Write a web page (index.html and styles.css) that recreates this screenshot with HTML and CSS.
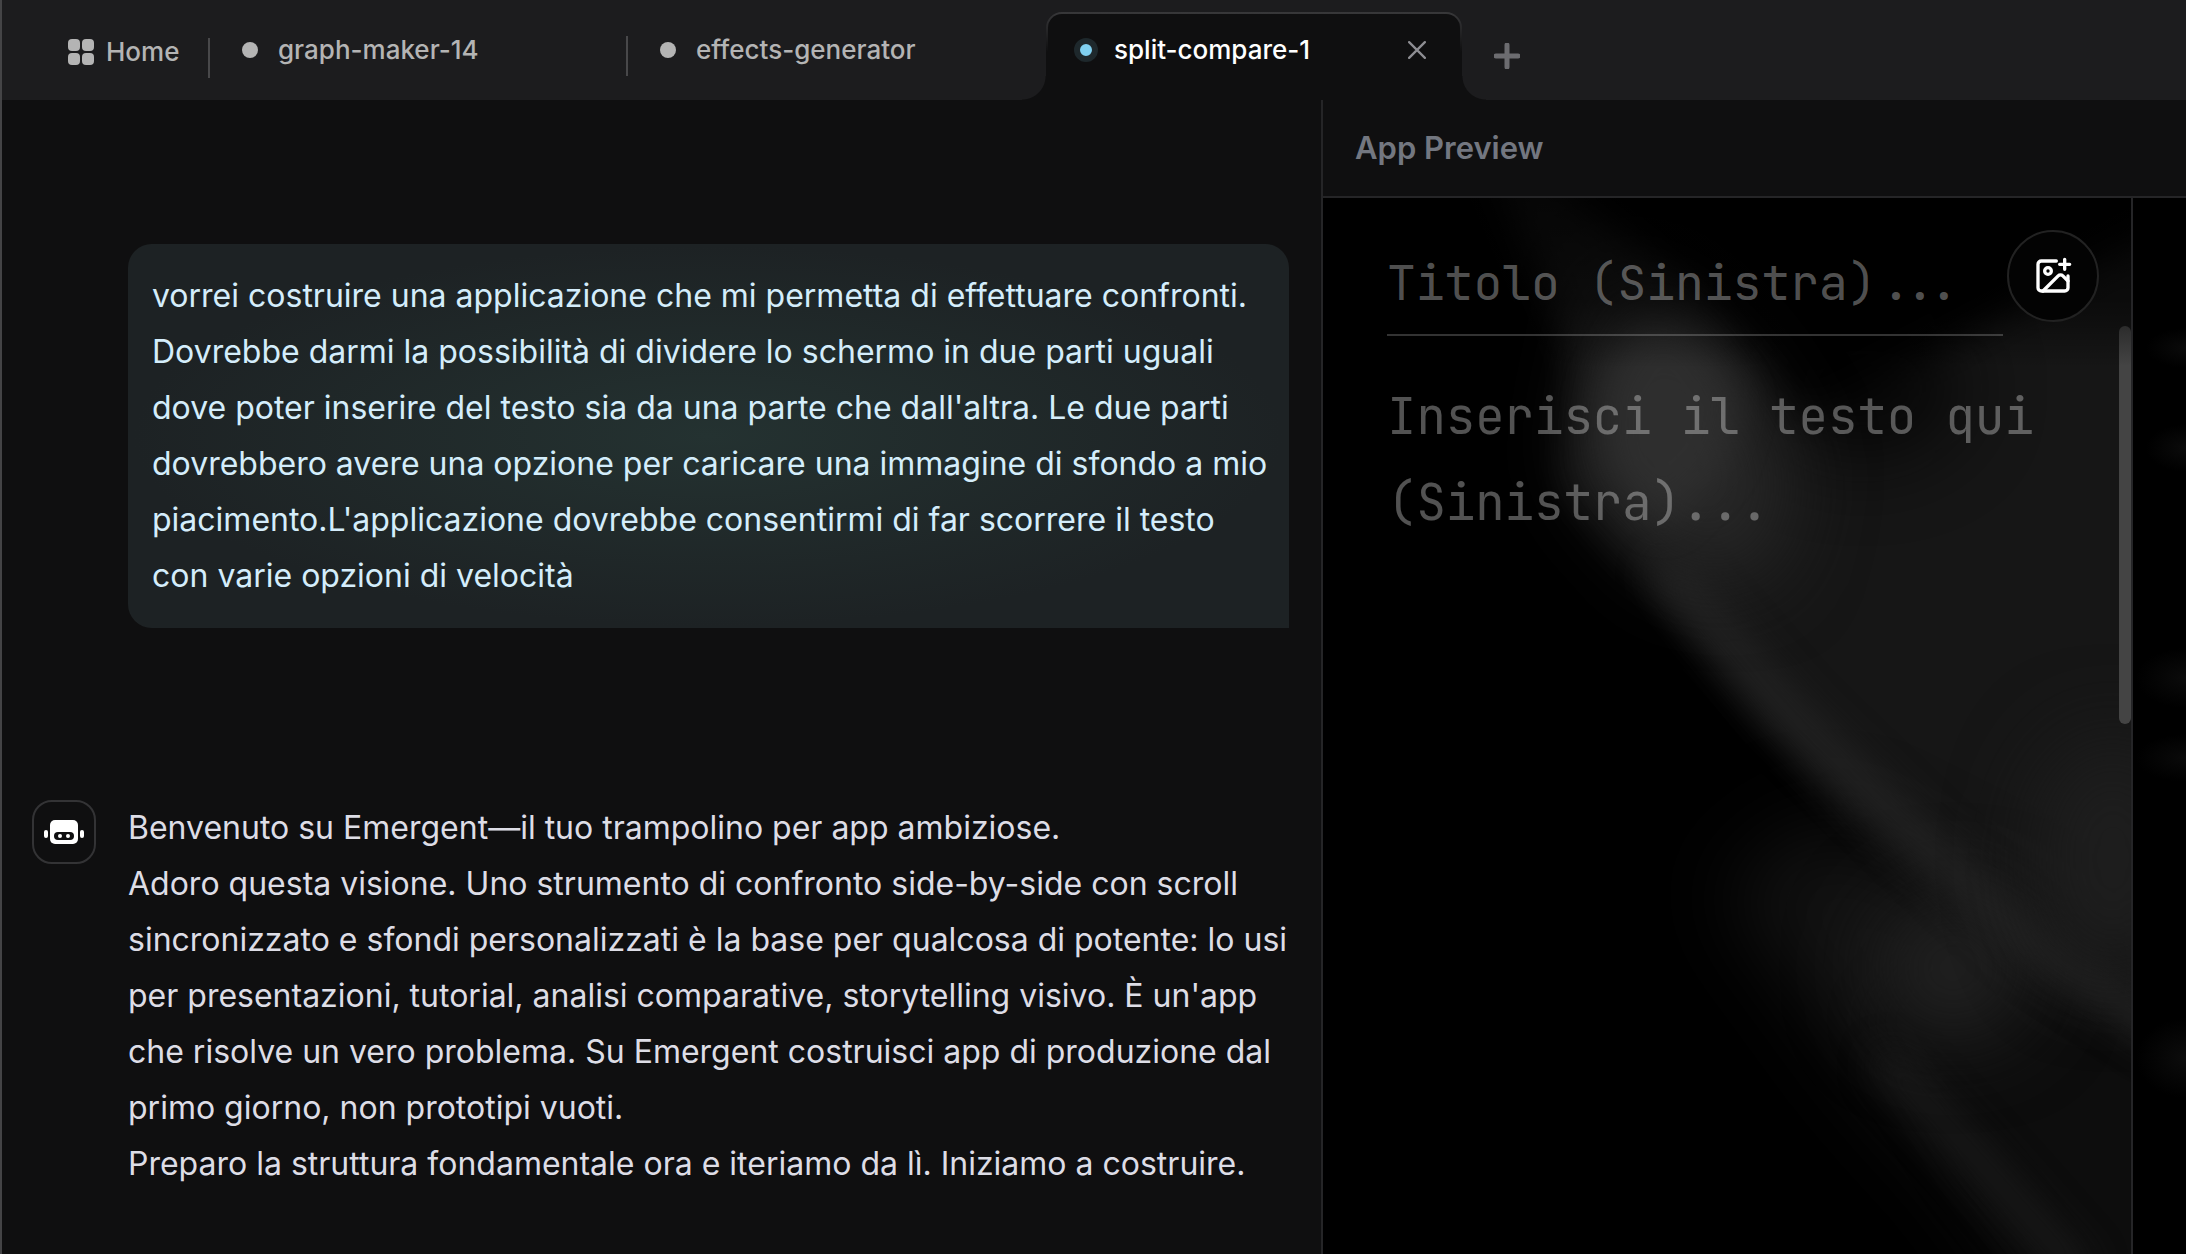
FILE: index.html
```html
<!DOCTYPE html>
<html lang="it">
  <head>
    <meta charset="utf-8">
    <title>split-compare-1</title>
    <link rel="stylesheet" href="styles.css">
  </head>
  <body>
    <nav class="tab-bar">
      <a href="#home" class="home-link">
        <svg class="home-icon" viewBox="0 0 26 26">
          <rect width="12" height="12" rx="4"/>
          <rect x="14" width="12" height="12" rx="4"/>
          <rect y="14" width="12" height="12" rx="4"/>
          <rect x="14" y="14" width="12" height="12" rx="4"/>
        </svg>
        Home
      </a>
      <a href="#graph-maker-14" class="tab tab-first"><span class="dot"></span>graph-maker-14</a>
      <a href="#effects-generator" class="tab"><span class="dot"></span>effects-generator</a>
      <div class="tab tab-active">
        <a href="#split-compare-1" class="tab-link"><span class="dot dot-live"></span>split-compare-1</a>
        <button type="button" class="icon-button" aria-label="Close tab">
          <svg class="close-icon" viewBox="0 0 16 16"><path d="M1 1l14 14M15 1L1 15"/></svg>
        </button>
      </div>
      <button type="button" class="icon-button new-tab" aria-label="New tab">
        <svg class="plus-icon" viewBox="0 0 26 26"><path d="M13 2v22M2 13h22"/></svg>
      </button>
    </nav>
    <main class="workspace">
      <section class="chat">
        <div class="user-message">vorrei costruire una applicazione che mi permetta di effettuare confronti. Dovrebbe darmi la possibilità di dividere lo schermo in due parti uguali dove poter inserire del testo sia da una parte che dall'altra. Le due parti dovrebbero avere una opzione per caricare una immagine di sfondo a mio piacimento.L'applicazione dovrebbe consentirmi di far scorrere il testo con varie opzioni di velocità</div>
        <div class="agent-message">
          <div class="avatar">
            <svg class="robot-icon" viewBox="0 0 40 24">
              <rect x="0" y="10" width="4" height="8" rx="2"/>
              <rect x="36" y="10" width="4" height="8" rx="2"/>
              <rect x="6" y="0" width="28" height="24" rx="5"/>
              <rect class="robot-face" x="10" y="12" width="20" height="8" rx="4"/>
              <circle cx="16" cy="16" r="2"/>
              <circle cx="24" cy="16" r="2"/>
            </svg>
          </div>
          <div class="agent-text">
            <p>Benvenuto su Emergent—il tuo trampolino per app ambiziose.</p>
            <p>Adoro questa visione. Uno strumento di confronto side-by-side con scroll sincronizzato e sfondi personalizzati è la base per qualcosa di potente: lo usi per presentazioni, tutorial, analisi comparative, storytelling visivo. È un'app che risolve un vero problema. Su Emergent costruisci app di produzione dal primo giorno, non prototipi vuoti.</p>
            <p>Preparo la struttura fondamentale ora e iteriamo da lì. Iniziamo a costruire.</p>
          </div>
        </div>
      </section>
      <section class="preview">
        <h2 class="preview-title">App Preview</h2>
        <div class="split">
          <div class="pane">
            <svg class="backdrop" viewBox="0 0 808 1056" preserveAspectRatio="xMidYMid slice" aria-hidden="true">
              <defs>
                <filter id="soft" x="-50%" y="-50%" width="200%" height="200%" color-interpolation-filters="sRGB"><feGaussianBlur stdDeviation="18"/></filter>
                <filter id="softer" x="-80%" y="-80%" width="260%" height="260%" color-interpolation-filters="sRGB"><feGaussianBlur stdDeviation="42"/></filter>
              </defs>
              <rect width="808" height="1056" fill="#000"/>
              <!-- main beam -->
              <path d="M150 -80L380 100L480 220L860 20V880L700 770L565 665L438 525L335 395L240 285L250 160Z" fill="#161616" filter="url(#soft)"/>
              <!-- lower beam -->
              <path d="M500 620L640 690L900 850V1160H760L640 990L540 880L400 690Z" fill="#121212" filter="url(#softer)"/>
              <path d="M540 820L640 690L900 870V1160H790L640 985Z" fill="#0a0a0a" fill-opacity=".6" filter="url(#soft)"/>
              <path d="M560 860L640 945L760 1080" fill="none" stroke="#1c1c1c" stroke-width="26" filter="url(#soft)"/>
              <ellipse cx="630" cy="770" rx="80" ry="70" fill="#222" filter="url(#softer)"/>
              <!-- ridge -->
              <path d="M340 370L470 520L590 635L700 740L850 840" fill="none" stroke="#242424" stroke-width="30" filter="url(#soft)"/>
              <ellipse cx="790" cy="660" rx="80" ry="120" fill="#1e1e1e" filter="url(#softer)"/>
              <ellipse cx="540" cy="190" rx="100" ry="70" fill="#020202" opacity=".8" filter="url(#softer)"/>
              <path d="M300 80L400 160L470 270L440 380L350 370L260 270Z" fill="#282828" filter="url(#softer)"/>
              <path d="M320 120L370 130L420 200L400 270L340 330L280 270L275 190Z" fill="#323232" opacity=".7" filter="url(#soft)"/>
            </svg>
            <div class="pane-header">
              <input type="text" class="title-input" placeholder="Titolo (Sinistra)..." aria-label="Titolo (Sinistra)">
            </div>
            <textarea class="text-input" placeholder="Inserisci il testo qui (Sinistra)..." aria-label="Testo (Sinistra)"></textarea>
            <div class="scroll-thumb"></div>
            <button type="button" class="upload-button" aria-label="Carica immagine di sfondo">
              <svg class="image-icon" viewBox="0 0 24 24">
                <path d="M14 3H5a2 2 0 0 0-2 2v14a2 2 0 0 0 2 2h14a2 2 0 0 0 2-2v-7"/>
                <path d="M16 5h6M19 2v6"/>
                <circle cx="9" cy="9" r="2"/>
                <path d="M21 15l-3.086-3.086a2 2 0 0 0-2.828 0L6 21"/>
              </svg>
            </button>
          </div>
          <div class="pane pane-right"></div>
        </div>
      </section>
    </main>
  </body>
</html>
```
FILE: styles.css
```css
* {
  box-sizing: border-box;
}
body {
  display: flex;
  flex-direction: column;
  min-height: 100vh;
  margin: 0;
  border-left: 2px solid #444446;
  background: #0f0f10;
  color: #dddde6;
  font: 32px/56px Inter, "Liberation Sans", sans-serif;
}
a {
  color: inherit;
  text-decoration: none;
}
button {
  padding: 0;
  border: none;
  background: none;
  cursor: pointer;
}
svg {
  display: block;
}

/* tabs */
.tab-bar {
  display: flex;
  height: 100px;
  padding: 12px 0 0 66px;
  background: #1c1c1e;
  color: #b4b4b4;
  font-size: 26px;
  font-weight: 500;
  line-height: 40px;
}
.home-link {
  display: flex;
  align-items: center;
  gap: 12px;
  width: 140px;
  height: 80px;
}
.home-icon {
  width: 26px;
  height: 26px;
  fill: #b4b4b4;
}
.tab {
  display: flex;
  align-items: center;
  gap: 20px;
  position: relative;
  width: 418px;
  height: 76px;
  padding-left: 34px;
}
.tab:before {
  content: "";
  position: absolute;
  left: 0;
  top: 24px;
  width: 2px;
  height: 40px;
  background: #48484a;
}
.tab-first:before {
  top: 26px;
}
.dot {
  width: 16px;
  height: 16px;
  border-radius: 50%;
  background: #b4b4b4;
}
.dot-live {
  width: 24px;
  height: 24px;
  border: 6px solid #1e282c;
  background: #80d0f0;
}
.tab-active {
  justify-content: space-between;
  width: 416px;
  height: 88px;
  margin-left: 2px;
  padding: 0 36px 12px 28px;
  border-radius: 16px 16px 0 0;
  background: linear-gradient(#38383a, #0f0f10 40px);
  color: #fff;
}
.tab-active:before {
  left: 2px;
  right: 2px;
  top: 2px;
  bottom: 0;
  width: auto;
  height: auto;
  border-radius: 14px 14px 0 0;
  background: #0f0f10;
}
/* flared feet */
.tab-active:after {
  content: "";
  position: absolute;
  left: -24px;
  right: -24px;
  bottom: 0;
  height: 24px;
  background:
    radial-gradient(circle at 0 0, transparent 23px, #0f0f10 24px) left / 24px 24px no-repeat,
    radial-gradient(circle at 100% 0, transparent 23px, #0f0f10 24px) right / 24px 24px no-repeat;
}
.tab-link {
  display: flex;
  align-items: center;
  gap: 16px;
  position: relative;
}
.icon-button {
  position: relative;
}
.close-icon {
  width: 18px;
  height: 18px;
  fill: none;
  stroke: #8e8e93;
  stroke-width: 2;
  stroke-linecap: round;
}
.new-tab {
  height: 88px;
  margin-left: 32px;
}
.plus-icon {
  width: 26px;
  height: 26px;
  fill: none;
  stroke: #6c6c70;
  stroke-width: 5;
  stroke-linecap: round;
}

/* chat */
.workspace {
  display: grid;
  grid-template-columns: 1319fr 865fr;
  flex: 1;
}
.chat {
  display: flex;
  flex-direction: column;
  gap: 172px;
  padding: 144px 32px 40px 30px;
}
.user-message {
  margin-left: 96px;
  padding: 24px 20px 24px 24px;
  border-radius: 24px 24px 0 24px;
  background: radial-gradient(ellipse at center, #243231, #1d2224 70%);
  color: #d4edfb;
}
.agent-message {
  display: grid;
  grid-template-columns: 64px 1fr;
  gap: 32px;
}
.agent-text p {
  margin: 0;
}
.avatar {
  display: flex;
  align-items: center;
  justify-content: center;
  width: 64px;
  height: 64px;
  border: 2px solid #333335;
  border-radius: 20px;
}
.robot-icon {
  width: 40px;
  height: 24px;
  fill: #fff;
}
.robot-face {
  fill: #0f0f10;
}

/* preview */
.preview {
  display: flex;
  flex-direction: column;
  min-width: 0;
  border-left: 2px solid #252527;
}
.preview-title {
  height: 98px;
  margin: 0;
  padding-left: 32px;
  border-bottom: 2px solid #252527;
  color: #737780;
  font-size: 31px;
  font-weight: 600;
  line-height: 96px;
}
.split {
  display: grid;
  grid-template-columns: 810fr 53fr;
  flex: 1;
  background: #000;
}
.pane {
  display: flex;
  flex-direction: column;
  position: relative;
  min-width: 0;
  border-right: 2px solid #252527;
}
.pane-right {
  border: none;
  background:
    radial-gradient(ellipse 40px 20px at 100% 150px, #0a0a0a, transparent),
    radial-gradient(ellipse 40px 24px at 100% 250px, #0b0b0b, transparent),
    radial-gradient(ellipse 50px 30px at 100% 480px, #0b0b0b, transparent),
    radial-gradient(ellipse 50px 24px at 100% 560px, #0a0a0a, transparent),
    radial-gradient(ellipse 50px 40px at 100% 860px, #0c0c0c, transparent),
    #000;
}
.backdrop {
  position: absolute;
  width: 100%;
  height: 100%;
}
.pane-header {
  position: relative;
  height: 170px;
  padding: 32px 128px 0 64px;
  background: linear-gradient(rgba(0,0,0,0.7), rgba(0,0,0,0.5) 60%, transparent);
}
.title-input,
.text-input {
  display: block;
  border: none;
  outline: none;
  background: none;
  color: #fff;
  font-family: "JetBrains Mono", "DejaVu Sans Mono", monospace;
}
.title-input {
  width: 100%;
  height: 106px;
  padding: 0;
  border-bottom: 2px solid rgba(255,255,255,0.2);
  font-size: 48px;
}
.text-input {
  position: relative;
  flex: 1;
  padding: 6px 64px;
  resize: none;
  overflow: hidden;
  font-size: 49px;
  font-variant-ligatures: none;
  line-height: 86px;
}
.title-input::placeholder,
.text-input::placeholder {
  color: rgba(255,255,255,0.32);
}
.scroll-thumb {
  position: absolute;
  top: 128px;
  right: 0;
  width: 12px;
  height: 398px;
  border-radius: 6px;
  background: linear-gradient(#2c2c2c, #444 40px);
}
.upload-button {
  display: flex;
  align-items: center;
  justify-content: center;
  position: absolute;
  top: 32px;
  right: 32px;
  width: 92px;
  height: 92px;
  border: 2px solid #222;
  border-radius: 50%;
  background: #030303;
}
.image-icon {
  width: 40px;
  height: 40px;
  fill: none;
  stroke: #fff;
  stroke-width: 2;
  stroke-linecap: round;
  stroke-linejoin: round;
}
```
